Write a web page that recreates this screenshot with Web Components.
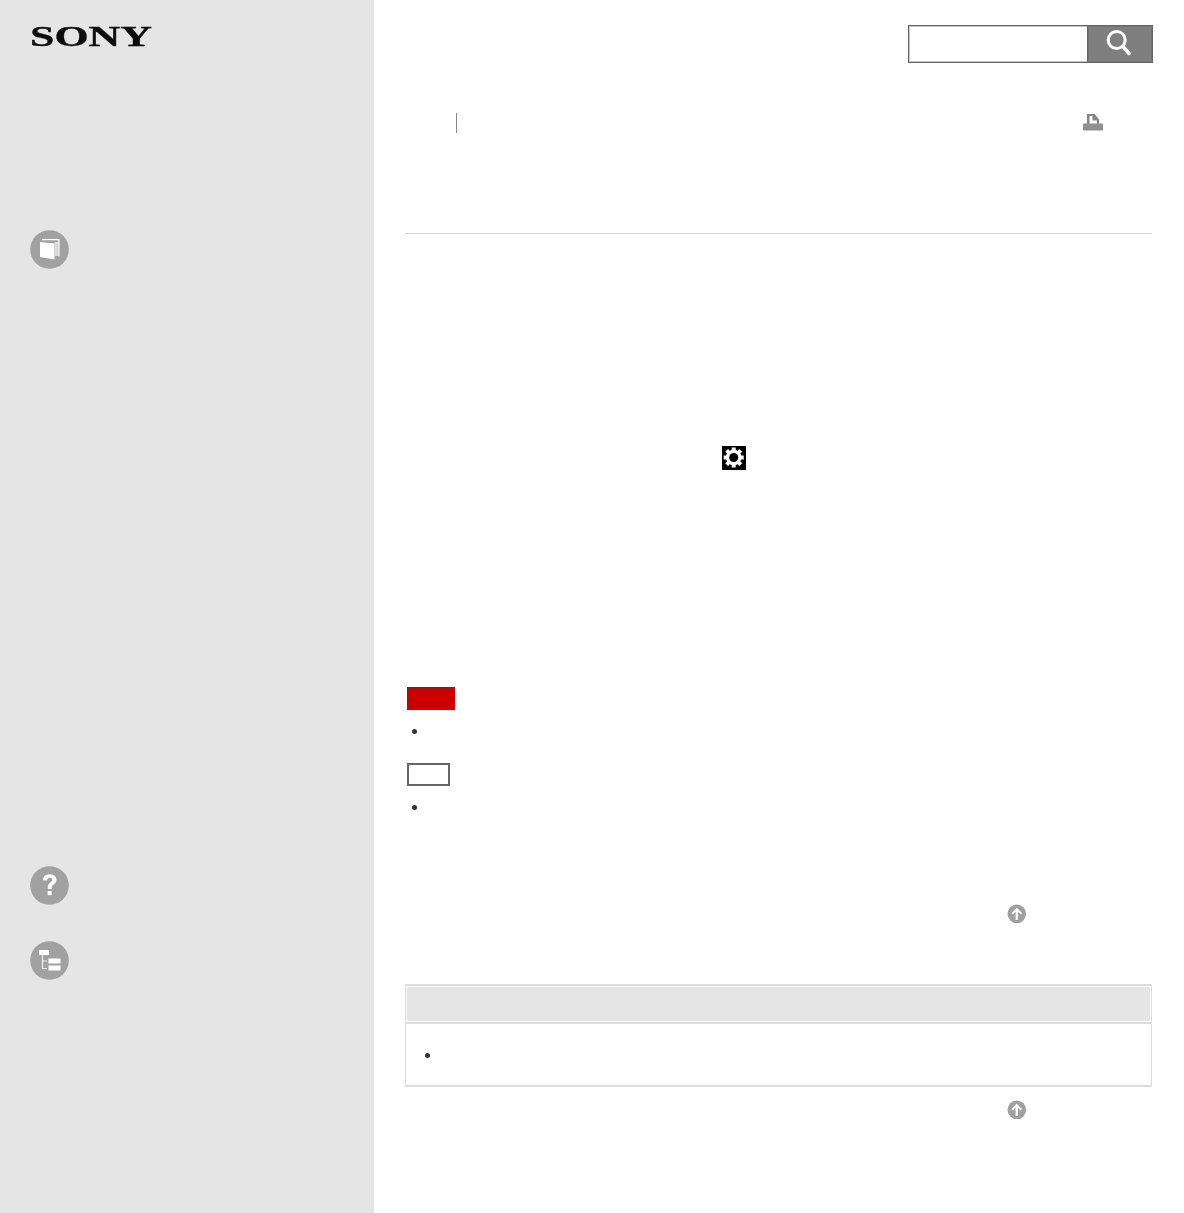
<!DOCTYPE html>
<html lang="en"><head><meta charset="utf-8"><title>Help Guide</title>
<style>html,body{margin:0;padding:0;background:#fff}</style></head>
<body>
<help-page>
  <side-bar slot="side"></side-bar>
  <main-pane slot="main"></main-pane>
</help-page>
<script>
const ICONS={
 book:`<svg width="40" height="40" viewBox="0 0 40 40"><circle cx="19.500" cy="19.500" r="19.300" fill="#a1a1a1"/><path d="M12 9h17.500v17.500h-1.300V10.300H12z" fill="#fff"/><path d="M10 12l14.500 1.500V29.500L10 27z" fill="#fff"/><path d="M24.500 12h3.300v14h-3.300z" fill="#dcdcdc"/></svg>`,
 help:`<svg width="40" height="40" viewBox="0 0 40 40"><circle cx="19.500" cy="19.500" r="19.300" fill="#a1a1a1"/><path d="M12.800 14.200c.4-4 3.300-6 7-6 3.900 0 6.700 2.200 6.700 5.600 0 2.500-1.400 3.700-3 5-1.300 1-1.800 1.600-1.800 3.300v.9h-4v-1.300c0-2.600 1-3.800 2.500-5 1.200-1 2-1.700 2-2.800 0-1.300-1-2.100-2.400-2.100-1.600 0-2.500 1-2.700 2.600z" fill="#fff"/><rect x="17.700" y="25" width="4" height="4.200" fill="#fff"/></svg>`,
 tree:`<svg width="40" height="40" viewBox="0 0 40 40"><circle cx="19.500" cy="19.500" r="19.300" fill="#a1a1a1"/><rect x="9" y="9" width="10" height="5" fill="#fff"/><rect x="18.500" y="17.500" width="12" height="5" fill="#fff"/><rect x="18.500" y="24.500" width="12" height="5" fill="#fff"/><path d="M12.500 14v13.500H17M12.500 20H17" stroke="#eee" stroke-width="1.200" fill="none"/></svg>`,
 up:`<svg width="20" height="20" viewBox="0 0 20 20"><circle cx="9.800" cy="9.800" r="9.300" fill="#a0a0a0"/><path d="M9.800 3.800l5.200 5.300-1.300 1.300-2.800-2.800V16H8.600V7.600L5.900 10.400 4.600 9.100z" fill="#fff"/></svg>`,
 gear:`<svg width="24" height="24" viewBox="0 0 24 24"><rect width="24" height="24" fill="#000"/><g fill="#fff"><circle cx="11.700" cy="11.500" r="7.800"/><rect x="9.700" y="1.500" width="4" height="20"/><rect x="9.700" y="1.500" width="4" height="20" transform="rotate(45 11.700 11.500)"/><rect x="9.700" y="1.500" width="4" height="20" transform="rotate(90 11.700 11.500)"/><rect x="9.700" y="1.500" width="4" height="20" transform="rotate(135 11.700 11.500)"/></g><circle cx="11.700" cy="11.500" r="4.500" fill="#000"/></svg>`,
 search:`<svg width="30" height="30" viewBox="0 0 30 30"><circle cx="11.700" cy="11" r="8.500" fill="none" stroke="#fff" stroke-width="3"/><path d="M18 17.500l6 7" stroke="#fff" stroke-width="3.500" stroke-linecap="round"/></svg>`,
 print:`<svg width="22" height="18" viewBox="0 0 22 18"><path d="M5 1h7.500l4.500 5.500V11h-2V7.500h-4.500V3H7.500v8H5z" fill="#858585"/><rect x="1" y="10.500" width="20" height="7" rx="1" fill="#8f8f8f"/></svg>`
};
function def(name,html){
  customElements.define(name,class extends HTMLElement{
    constructor(){super();this.attachShadow({mode:'open'}).innerHTML=html;}
  });
}
const soft='filter:blur(.45px);';
def('help-page',`<style>:host{display:grid;grid-template-columns:374px 810px;height:1213px;width:1184px;overflow:hidden;font-family:"Liberation Sans",Arial,sans-serif}</style><slot name="side"></slot><slot name="main"></slot>`);
def('side-bar',`<style>
:host{display:flex;flex-direction:column;background:#e5e5e5;padding:0 0 0 30px;height:1213px;box-sizing:border-box}
.logo{height:72px;margin-left:1px;filter:blur(.3px)}
.logo svg{display:block}
.i1{margin-top:158px}.i2{margin-top:596px}.i3{margin-top:35px}
div.i{width:40px;height:40px;line-height:0;${soft}}
</style>
<div class="logo"><svg width="122" height="72" viewBox="0 0 122 72"><text x="-1" y="46" font-family="Liberation Serif, serif" font-weight="700" font-size="28.500" textLength="122" lengthAdjust="spacingAndGlyphs" fill="#0c0c0c" stroke="#0c0c0c" stroke-width=".3">SONY</text></svg></div>
<div class="i i1">${ICONS.book}</div>
<div class="i i2">${ICONS.help}</div>
<div class="i i3">${ICONS.tree}</div>`);
def('search-box',`<style>
:host{display:flex;width:245px;height:38px;box-sizing:border-box;border:1px solid #666;background:#fff;box-shadow:inset 0 0 0 1px #c4c4c4}
.f{flex:1}
.b{width:65px;box-sizing:border-box;background:#7f7f7f;border-left:1px solid #666;box-shadow:inset 0 0 0 1px #747474;display:flex;align-items:center;justify-content:center;line-height:0}
.b svg{${soft}}
</style><div class="f"></div><div class="b">${ICONS.search}</div>`);
def('tool-bar',`<style>
:host{display:flex;align-items:center;height:20px;justify-content:space-between;padding:0 48px 0 51px}
.sep{width:1px;height:20px;background:#8a8a8a}
.p{line-height:0;margin-top:-2px;${soft}}
</style><div class="sep"></div><div class="p">${ICONS.print}</div>`);
def('note-tag',`<style>
:host{display:block;box-sizing:border-box;height:23px;margin-left:2px}
:host([kind=warn]){width:48px;background:#c00}
:host([kind=hint]){width:43px;border:2px solid #666;background:#fff}
</style>`);
def('bullet-dot',`<style>
:host{display:block;width:5px;height:5px;border-radius:50%;background:#333;margin-left:7px}
</style>`);
def('top-link',`<style>
:host{display:flex;justify-content:flex-end;padding-right:125px;line-height:0}
svg{${soft}}
</style>${ICONS.up}`);
def('info-box',`<style>
:host{display:block;box-sizing:border-box;height:103px;border:2px solid #dcdcdc;border-left-width:1px;border-right-width:1px;background:#fff}
.h{height:34px;margin:1px 1px 0;background:#e4e4e4;}
.l{height:2px;margin-top:1px;background:#dcdcdc}
.c{padding:29px 0 0 19px}
.c i{display:block;width:5px;height:5px;border-radius:50%;background:#333}
</style><div class="h"></div><div class="l"></div><div class="c"><i></i></div>`);
def('main-pane',`<style>
:host{display:block;padding:25px 32px 0 31px;height:1213px;box-sizing:border-box}
search-box{margin-left:503px;margin-right:-1px}
tool-bar{margin-top:50px}
.rule{height:1px;background:#d5d5d5;margin-top:100px}
.gear{margin:212px 0 0 317px;line-height:0;height:24px}
.gear svg{filter:blur(.35px)}
note-tag[kind=warn]{margin-top:217px}
.d1{margin-top:19px}
note-tag[kind=hint]{margin-top:29px}
.d2{margin-top:19px}
.u1{margin-top:94px}
info-box{margin-top:60px}
.u2{margin-top:13px}
</style>
<search-box></search-box>
<tool-bar></tool-bar>
<div class="rule"></div>
<div class="gear">${ICONS.gear}</div>
<note-tag kind="warn"></note-tag>
<bullet-dot class="d1"></bullet-dot>
<note-tag kind="hint"></note-tag>
<bullet-dot class="d2"></bullet-dot>
<top-link class="u1"></top-link>
<info-box></info-box>
<top-link class="u2"></top-link>`);
</script>
</body></html>
